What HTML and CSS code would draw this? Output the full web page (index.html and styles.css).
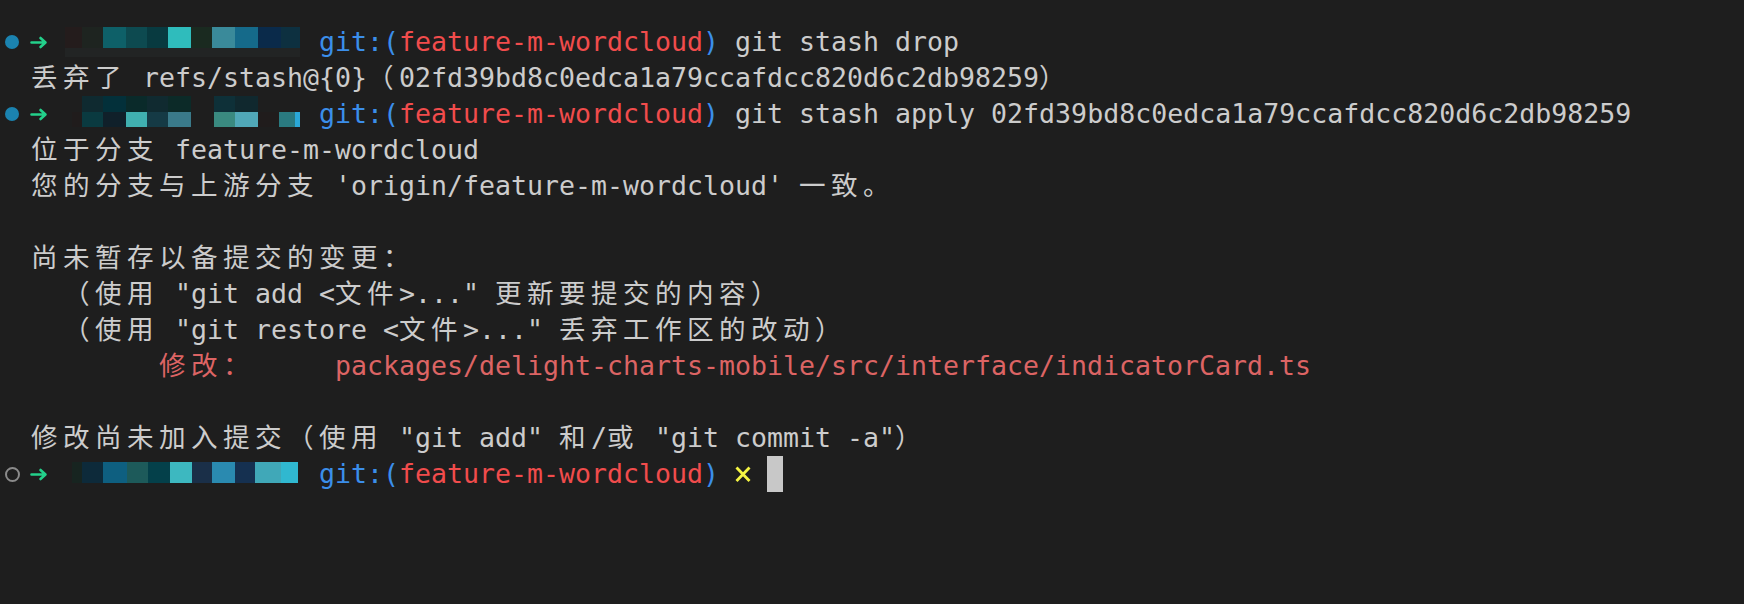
FILE: index.html
```html
<!DOCTYPE html>
<html lang="zh-CN">
<head>
<meta charset="utf-8">
<title>Terminal</title>
<link rel="stylesheet" href="styles.css">
</head>
<body>
<div class="term">
  <div class="line"><span class="gutter"><span class="dot"></span></span><span class="text"><svg class="arrow" viewBox="0 0 16 36" width="16" height="36"><path d="M0.5 18.5 H13.5 M9.5 14 L14.5 18.5 L9.5 23" /></svg> <span class="blur b1"></span> <span class="blue">git:(</span><span class="red">feature-m-wordcloud</span><span class="blue">)</span> git stash drop</span></div>
  <div class="line"><span class="gutter"></span><span class="text"><span class="c">丢弃了</span> refs/stash@{0}<span class="c">（</span>02fd39bd8c0edca1a79ccafdcc820d6c2db98259<span class="c">）</span></span></div>
  <div class="line"><span class="gutter"><span class="dot"></span></span><span class="text"><svg class="arrow" viewBox="0 0 16 36" width="16" height="36"><path d="M0.5 18.5 H13.5 M9.5 14 L14.5 18.5 L9.5 23" /></svg> <span class="blur b2"></span> <span class="blue">git:(</span><span class="red">feature-m-wordcloud</span><span class="blue">)</span> git stash apply 02fd39bd8c0edca1a79ccafdcc820d6c2db98259</span></div>
  <div class="line"><span class="gutter"></span><span class="text"><span class="c">位于分支</span> feature-m-wordcloud</span></div>
  <div class="line"><span class="gutter"></span><span class="text"><span class="c">您的分支与上游分支</span> 'origin/feature-m-wordcloud' <span class="c">一致。</span></span></div>
  <div class="line"><span class="gutter"></span><span class="text"></span></div>
  <div class="line"><span class="gutter"></span><span class="text"><span class="c">尚未暂存以备提交的变更：</span></span></div>
  <div class="line"><span class="gutter"></span><span class="text">  <span class="c">（使用</span> "git add &lt;<span class="c">文件</span>&gt;..." <span class="c">更新要提交的内容）</span></span></div>
  <div class="line"><span class="gutter"></span><span class="text">  <span class="c">（使用</span> "git restore &lt;<span class="c">文件</span>&gt;..." <span class="c">丢弃工作区的改动）</span></span></div>
  <div class="line"><span class="gutter"></span><span class="text mod">        <span class="c">修改：</span>     packages/delight-charts-mobile/src/interface/indicatorCard.ts</span></div>
  <div class="line"><span class="gutter"></span><span class="text"></span></div>
  <div class="line"><span class="gutter"></span><span class="text"><span class="c">修改尚未加入提交（使用</span> "git add" <span class="c">和</span>/<span class="c">或</span> "git commit -a"<span class="c">）</span></span></div>
  <div class="line"><span class="gutter"><span class="ring"></span></span><span class="text"><svg class="arrow" viewBox="0 0 16 36" width="16" height="36"><path d="M0.5 18.5 H13.5 M9.5 14 L14.5 18.5 L9.5 23" /></svg> <span class="blur b3"></span> <span class="blue">git:(</span><span class="red">feature-m-wordcloud</span><span class="blue">)</span> <svg class="dirty" viewBox="0 0 16 36" width="16" height="36" aria-label="✗"><path d="M1.5 11.5 L14.5 25 M14.5 11.5 L1.5 25" /></svg> <span class="cursor"></span></span></div>
</div>
</body>
</html>
```

FILE: styles.css
```css
html, body {
  margin: 0;
  padding: 0;
  background: #1e1e1e;
}

body {
  width: 1744px;
  height: 604px;
  overflow: hidden;
  font-family: "DejaVu Sans Mono", "Noto Sans CJK SC", monospace;
  font-size: 26.58px;
  color: #cccccc;
}

.term {
  padding-top: 24px;
  display: flex;
  flex-direction: column;
}

.line {
  display: flex;
  align-items: center;
  height: 36px;
}

.gutter {
  flex: none;
  width: 31px;
  height: 36px;
  display: flex;
  align-items: center;
  padding-left: 5px;
  box-sizing: border-box;
}

.dot {
  width: 14px;
  height: 14px;
  border-radius: 50%;
  background: #1b83b0;
}

.ring {
  width: 15px;
  height: 15px;
  border-radius: 50%;
  border: 2.5px solid #8a8a8a;
  box-sizing: border-box;
}

.text {
  white-space: pre;
  line-height: 36px;
  height: 36px;
}

.c {
  letter-spacing: 5.42px;
}

.arrow {
  display: inline-block;
  vertical-align: top;
  overflow: visible;
  fill: none;
  stroke: #23d18b;
  stroke-width: 2.6;
  stroke-linecap: round;
  stroke-linejoin: round;
}

.dirty {
  display: inline-block;
  vertical-align: top;
  fill: none;
  stroke: #f5f543;
  stroke-width: 2.8;
  stroke-linecap: butt;
}

.blue { color: #3b8eea; }
.red { color: #f14c4c; }
.mod { color: #dc6464; }

.blur {
  display: inline-block;
  vertical-align: top;
  width: 240px;
  height: 36px;
}

.b1 {
  background:
    linear-gradient(90deg,
      transparent 0 2px,
      #241c1c 2px 19px,
      #1e2420 19px 40px,
      #0e6068 40px 63px,
      #0d4a50 63px 84px,
      #083a40 84px 105px,
      #2fbcbc 105px 128px,
      #1a2a20 128px 149px,
      #3a8a9a 149px 172px,
      #156a8a 172px 195px,
      #0a2a4a 195px 218px,
      #0d3040 218px 237px,
      transparent 237px) 0 3px / 240px 21px no-repeat,
    linear-gradient(90deg,
      transparent 0 2px,
      #222424 2px 237px,
      transparent 237px) 0 24px / 240px 9px no-repeat;
}

.b2 {
  background:
    linear-gradient(90deg,
      transparent 0 19px,
      #0f2a30 19px 40px,
      #03303a 40px 63px,
      #0a2a2a 63px 84px,
      #102a30 84px 105px,
      #0c2a28 105px 128px,
      transparent 128px 151px,
      #0e3038 151px 172px,
      #10282e 172px 195px,
      transparent 195px) 0 0 / 240px 16px no-repeat,
    linear-gradient(90deg,
      transparent 0 9px,
      #201c1c 9px 19px,
      #0a3a40 19px 40px,
      #10202a 40px 63px,
      #40b0b0 63px 84px,
      #153a45 84px 105px,
      #3a7a8a 105px 128px,
      transparent 128px 151px,
      #3a8a80 151px 172px,
      #50a8b8 172px 195px,
      #201c1c 195px 216px,
      #2a7a80 216px 232px,
      #2aa8d8 232px 237px,
      transparent 237px) 0 16px / 240px 15px no-repeat;
}

.b3 {
  background:
    linear-gradient(90deg,
      transparent 0 9px,
      #172420 9px 19px,
      #0d2a3a 19px 40px,
      #0e5f80 40px 64px,
      #1d5a5a 64px 85px,
      #04404a 85px 107px,
      #3db8c0 107px 129px,
      #1a2f48 129px 149px,
      #2a8ab0 149px 172px,
      #153050 172px 192px,
      #40a8b8 192px 218px,
      #30b8d0 218px 235px,
      transparent 235px) 0 6px / 240px 21px no-repeat;
}

.cursor {
  display: inline-block;
  vertical-align: top;
  width: 16px;
  height: 36px;
  background: #c8c8c8;
}
```
